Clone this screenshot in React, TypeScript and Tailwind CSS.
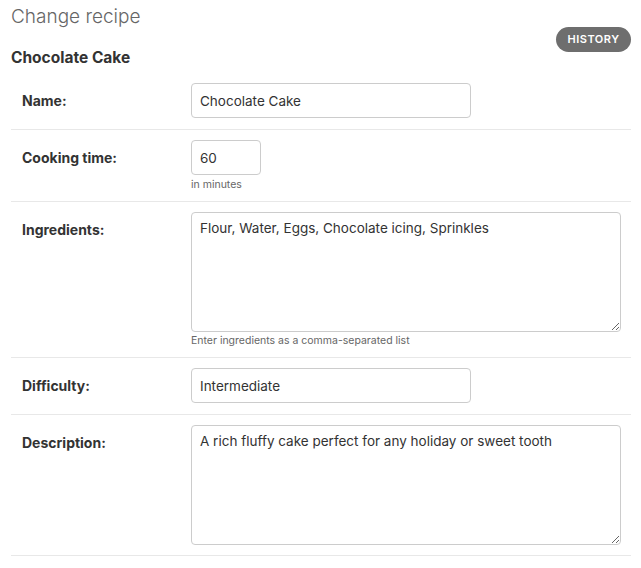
import React from "react";

const font = { fontFamily: "Inter, 'Noto Sans', sans-serif" };

function Row({
    label,
    children,
    pad = "py-[10px]",
}: {
    label: string;
    children: React.ReactNode;
    pad?: string;
}) {
    return (
        <div className={`flex border-b border-[#e8e8e8] ${pad}`}>
            <label className="w-[180px] shrink-0 pl-[11px] pt-[10px] text-[14px] font-bold leading-4 text-[#333]">
                {label}
            </label>
            <div className="flex-1 pr-[10px]">{children}</div>
        </div>
    );
}

export default function App() {
    const input =
        "h-[35px] rounded-[4px] border border-[#ccc] bg-white px-[8px] text-[13.5px] text-[#333] outline-none";
    const area =
        "block h-[120px] w-[430px] rounded-[4px] border border-[#ccc] bg-white px-[8px] py-[7px] text-[13.5px] leading-4 text-[#333] outline-none";
    return (
        <div className="min-h-[568px] bg-white px-[11px] pr-[10px]" style={font}>
            <h1 className="pt-[5px] text-[19px] font-light leading-6 text-[#666]">Change recipe</h1>
            <div className="flex items-start justify-between">
                <h2 className="pt-[19px] text-[15.5px] font-bold leading-5 text-[#333]">Chocolate Cake</h2>
                <button className="-mt-[2px] h-[25px] w-[75px] rounded-full bg-[#6e6e6e] text-[11px] font-semibold tracking-[0.5px] text-white">
                    HISTORY
                </button>
            </div>
            <div className="mt-[5px]">
                <Row label="Name:" pad="pt-[10px] pb-[11px]">
                    <input className={`${input} w-[280px]`} defaultValue="Chocolate Cake" />
                </Row>
                <Row label="Cooking time:">
                    <input className={`${input} w-[70px]`} defaultValue="60" />
                    <div className="mt-[4px] text-[10.5px] leading-3 text-[#666]">in minutes</div>
                </Row>
                <Row label="Ingredients:">
                    <textarea
                        className={area}
                        defaultValue="Flour, Water, Eggs, Chocolate icing, Sprinkles"
                    />
                    <div className="mt-[3px] text-[10.5px] leading-3 text-[#666]">
                        Enter ingredients as a comma-separated list
                    </div>
                </Row>
                <Row label="Difficulty:" pad="pt-[10px] pb-[11px]">
                    <input className={`${input} w-[280px]`} defaultValue="Intermediate" />
                </Row>
                <Row label="Description:">
                    <textarea
                        className={area}
                        defaultValue="A rich fluffy cake perfect for any holiday or sweet tooth"
                    />
                </Row>
            </div>
        </div>
    );
}
